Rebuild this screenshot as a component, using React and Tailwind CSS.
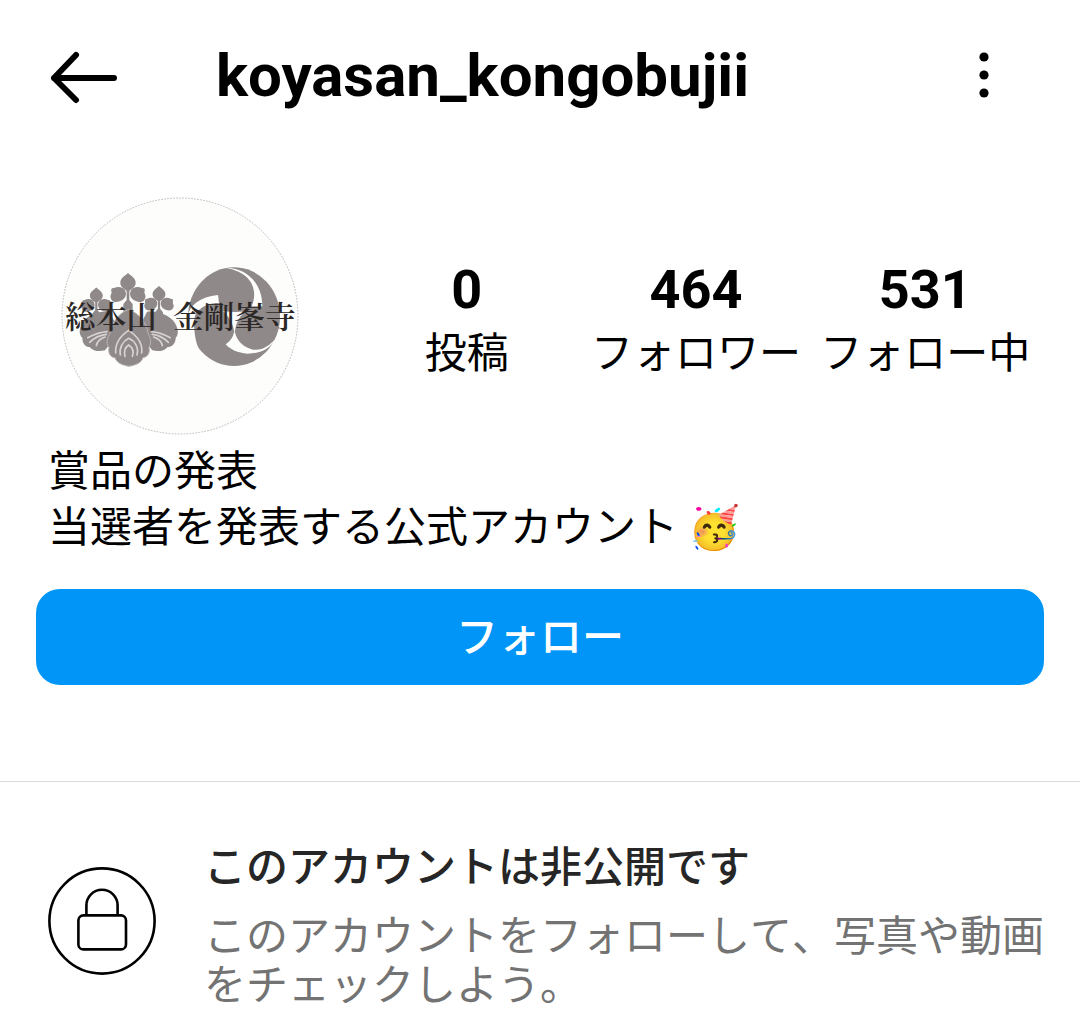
import React from "react";

const STATS = [
    { value: "0", label: "投稿" },
    { value: "464", label: "フォロワー" },
    { value: "531", label: "フォロー中" },
];

function BackIcon() {
    return (
        <svg
            className="h-14 w-18"
            viewBox="0 0 72 56"
            fill="none"
            stroke="currentColor"
            strokeWidth="6"
            strokeLinecap="round"
            strokeLinejoin="round"
        >
            <path d="M66 30H6M28 7L6 30l22 22" />
        </svg>
    );
}

function MoreIcon() {
    return (
        <svg className="h-14 w-14" viewBox="0 0 56 56" fill="currentColor">
            <circle cx="28" cy="9" r="4.6" />
            <circle cx="28" cy="27" r="4.6" />
            <circle cx="28" cy="45" r="4.6" />
        </svg>
    );
}

function LockIcon() {
    return (
        <svg
            className="size-27 shrink-0"
            viewBox="0 0 108 108"
            fill="none"
            stroke="#000"
            strokeWidth="2.6"
        >
            <circle cx="54" cy="54" r="52.6" />
            <rect x="30.4" y="48.4" width="47.6" height="34" rx="5" />
            <path d="M38.4 48V38.4a15.6 15.6 0 0 1 31.2 0V48" />
        </svg>
    );
}

// Bunga kecil tiga kelopak di atas daun
function Blossom({ x, y, s = 1 }) {
    return (
        <g transform={`translate(${x} ${y}) scale(${s})`}>
            <path d="M0-27C8-19 23-12 23 2C23 14 12 20 4 26L-4 26C-12 20-23 14-23 2C-23-12-8-19 0-27Z" />
            <path d="M-8 26C-14 14-30 12-42 18C-50 18-52 22-49 32C-54 42-54 48-47 56C-40 64-20 58-14 52C-6 44-4 36-8 26Z" />
            <path d="M8 26C14 14 30 12 42 18C50 18 52 22 49 32C54 42 54 48 47 56C40 64 20 58 14 52C6 44 4 36 8 26Z" />
            <path d="M-4 22H4V54L14 66V92H-14V66L-4 54Z" />
        </g>
    );
}

function Avatar() {
    return (
        <svg
            className="size-60 shrink-0"
            viewBox="31 31 720 720"
            role="img"
            aria-label="総本山 金剛峯寺"
        >
            <circle
                cx="391"
                cy="391"
                r="354"
                fill="#fdfdfb"
                stroke="#999"
                strokeWidth="2"
                strokeDasharray="5 4"
            />
            <g fill="#8f8989">
                <Blossom x={140} y={328} s={0.84} />
                <Blossom x={328} y={324} s={0.84} />
                <Blossom x={235} y={289} />
                <path d="M180 378C140 374 100 396 94 420C86 440 92 450 98 456C98 474 108 484 120 484C132 498 150 498 166 494L210 440Z" />
                <path d="M292 378C332 374 372 396 380 420C388 440 384 450 378 456C378 474 366 484 354 484C342 498 324 498 308 494L262 440Z" />
                <path
                    d="M237 372C210 380 184 410 180 446C168 462 172 478 178 486C174 506 186 516 196 516C202 534 220 538 238 542C256 538 274 534 280 516C292 514 302 504 298 486C304 474 306 460 296 446C292 410 264 380 237 372Z"
                    stroke="#b9b5b4"
                    strokeWidth="3"
                />
            </g>
            <g fill="none" stroke="#d6d3d2" strokeWidth="5" strokeLinecap="round">
                <path d="M198 502C196 474 210 452 237 434C264 452 280 474 276 502" />
                <path d="M212 508C208 486 220 466 237 458C256 466 268 486 262 508" />
                <path d="M226 512C222 496 228 484 237 478C246 484 254 496 248 512" />
                <path d="M114 456C126 450 146 440 172 438M120 470C134 456 152 448 170 446M140 480C142 468 154 458 166 454" />
                <path d="M362 456C350 450 330 440 306 438M356 470C342 456 326 448 308 446M338 480C336 468 324 458 312 454" />
            </g>
            <ellipse cx="553" cy="393" rx="138" ry="148" fill="#8f8989" />
            <g fill="#fdfdfb">
                <path d="M530 247C575 244 638 280 638 362L606 362C618 334 616 304 598 282C582 262 556 252 530 247Z" />
                <path d="M414 392C420 358 450 334 505 328L508 352C480 352 462 360 452 370C432 380 432 410 434 430C436 460 442 478 450 494C424 466 410 424 414 392Z" />
                <path d="M692 438C672 482 640 504 594 504C564 502 542 492 528 476C540 468 550 456 553 440L556 440C560 462 580 486 610 492C640 496 672 474 692 438Z" />
                <path d="M520 376C545 380 570 380 592 376C572 388 558 406 555 446C553 420 540 394 520 376Z" />
            </g>
            <g
                fill="#2b2727"
                fontSize="92"
                className="font-['Noto_Serif_CJK_JP','Noto_Sans_CJK_JP',serif] font-semibold"
            >
                <text x="46" y="428">
                    総本山
                </text>
                <text x="370" y="428">
                    金剛峯寺
                </text>
            </g>
        </svg>
    );
}

export default function App() {
    return (
        <div className="bg-white font-[Roboto,'Noto_Sans_CJK_JP',sans-serif] text-[42px] text-black">
            <header className="flex h-38 items-center px-12">
                <button type="button" aria-label="戻る">
                    <BackIcon />
                </button>
                <h1 className="ml-24 flex-1 text-[60px] leading-none font-bold">
                    koyasan_kongobujii
                </h1>
                <button type="button" aria-label="その他" className="mr-5">
                    <MoreIcon />
                </button>
            </header>

            <main>
                <section className="px-9 pt-11">
                    <div className="flex items-center">
                        <div className="ml-6">
                            <Avatar />
                        </div>
                        <ul className="mr-1 ml-13 grid flex-1 grid-cols-3 pt-3 text-center">
                            {STATS.map((s) => (
                                <li key={s.label} className="whitespace-nowrap">
                                    <div className="text-[54px] leading-16 font-bold">
                                        {s.value}
                                    </div>
                                    <div className="leading-16">{s.label}</div>
                                </li>
                            ))}
                        </ul>
                    </div>
                    <div className="mt-2 px-3 leading-14">
                        <p>賞品の発表</p>
                        <p>当選者を発表する公式アカウント 🥳</p>
                    </div>
                    <button
                        type="button"
                        className="mt-[33px] h-24 w-full rounded-3xl bg-[#0095f6] font-medium text-white"
                    >
                        フォロー
                    </button>
                </section>

                <section className="mt-24 flex items-center border-t border-[#dbdbdb] pt-[50px] pr-8 pb-6 pl-12">
                    <LockIcon />
                    <div className="ml-12 flex-1">
                        <h2 className="leading-18 font-medium text-[#262626]">
                            このアカウントは非公開です
                        </h2>
                        <p className="mt-2 leading-[49px] text-[#737373] [font-kerning:none]">
                            このアカウントをフォローして、写真や動画をチェックしよう。
                        </p>
                    </div>
                </section>
            </main>
        </div>
    );
}
